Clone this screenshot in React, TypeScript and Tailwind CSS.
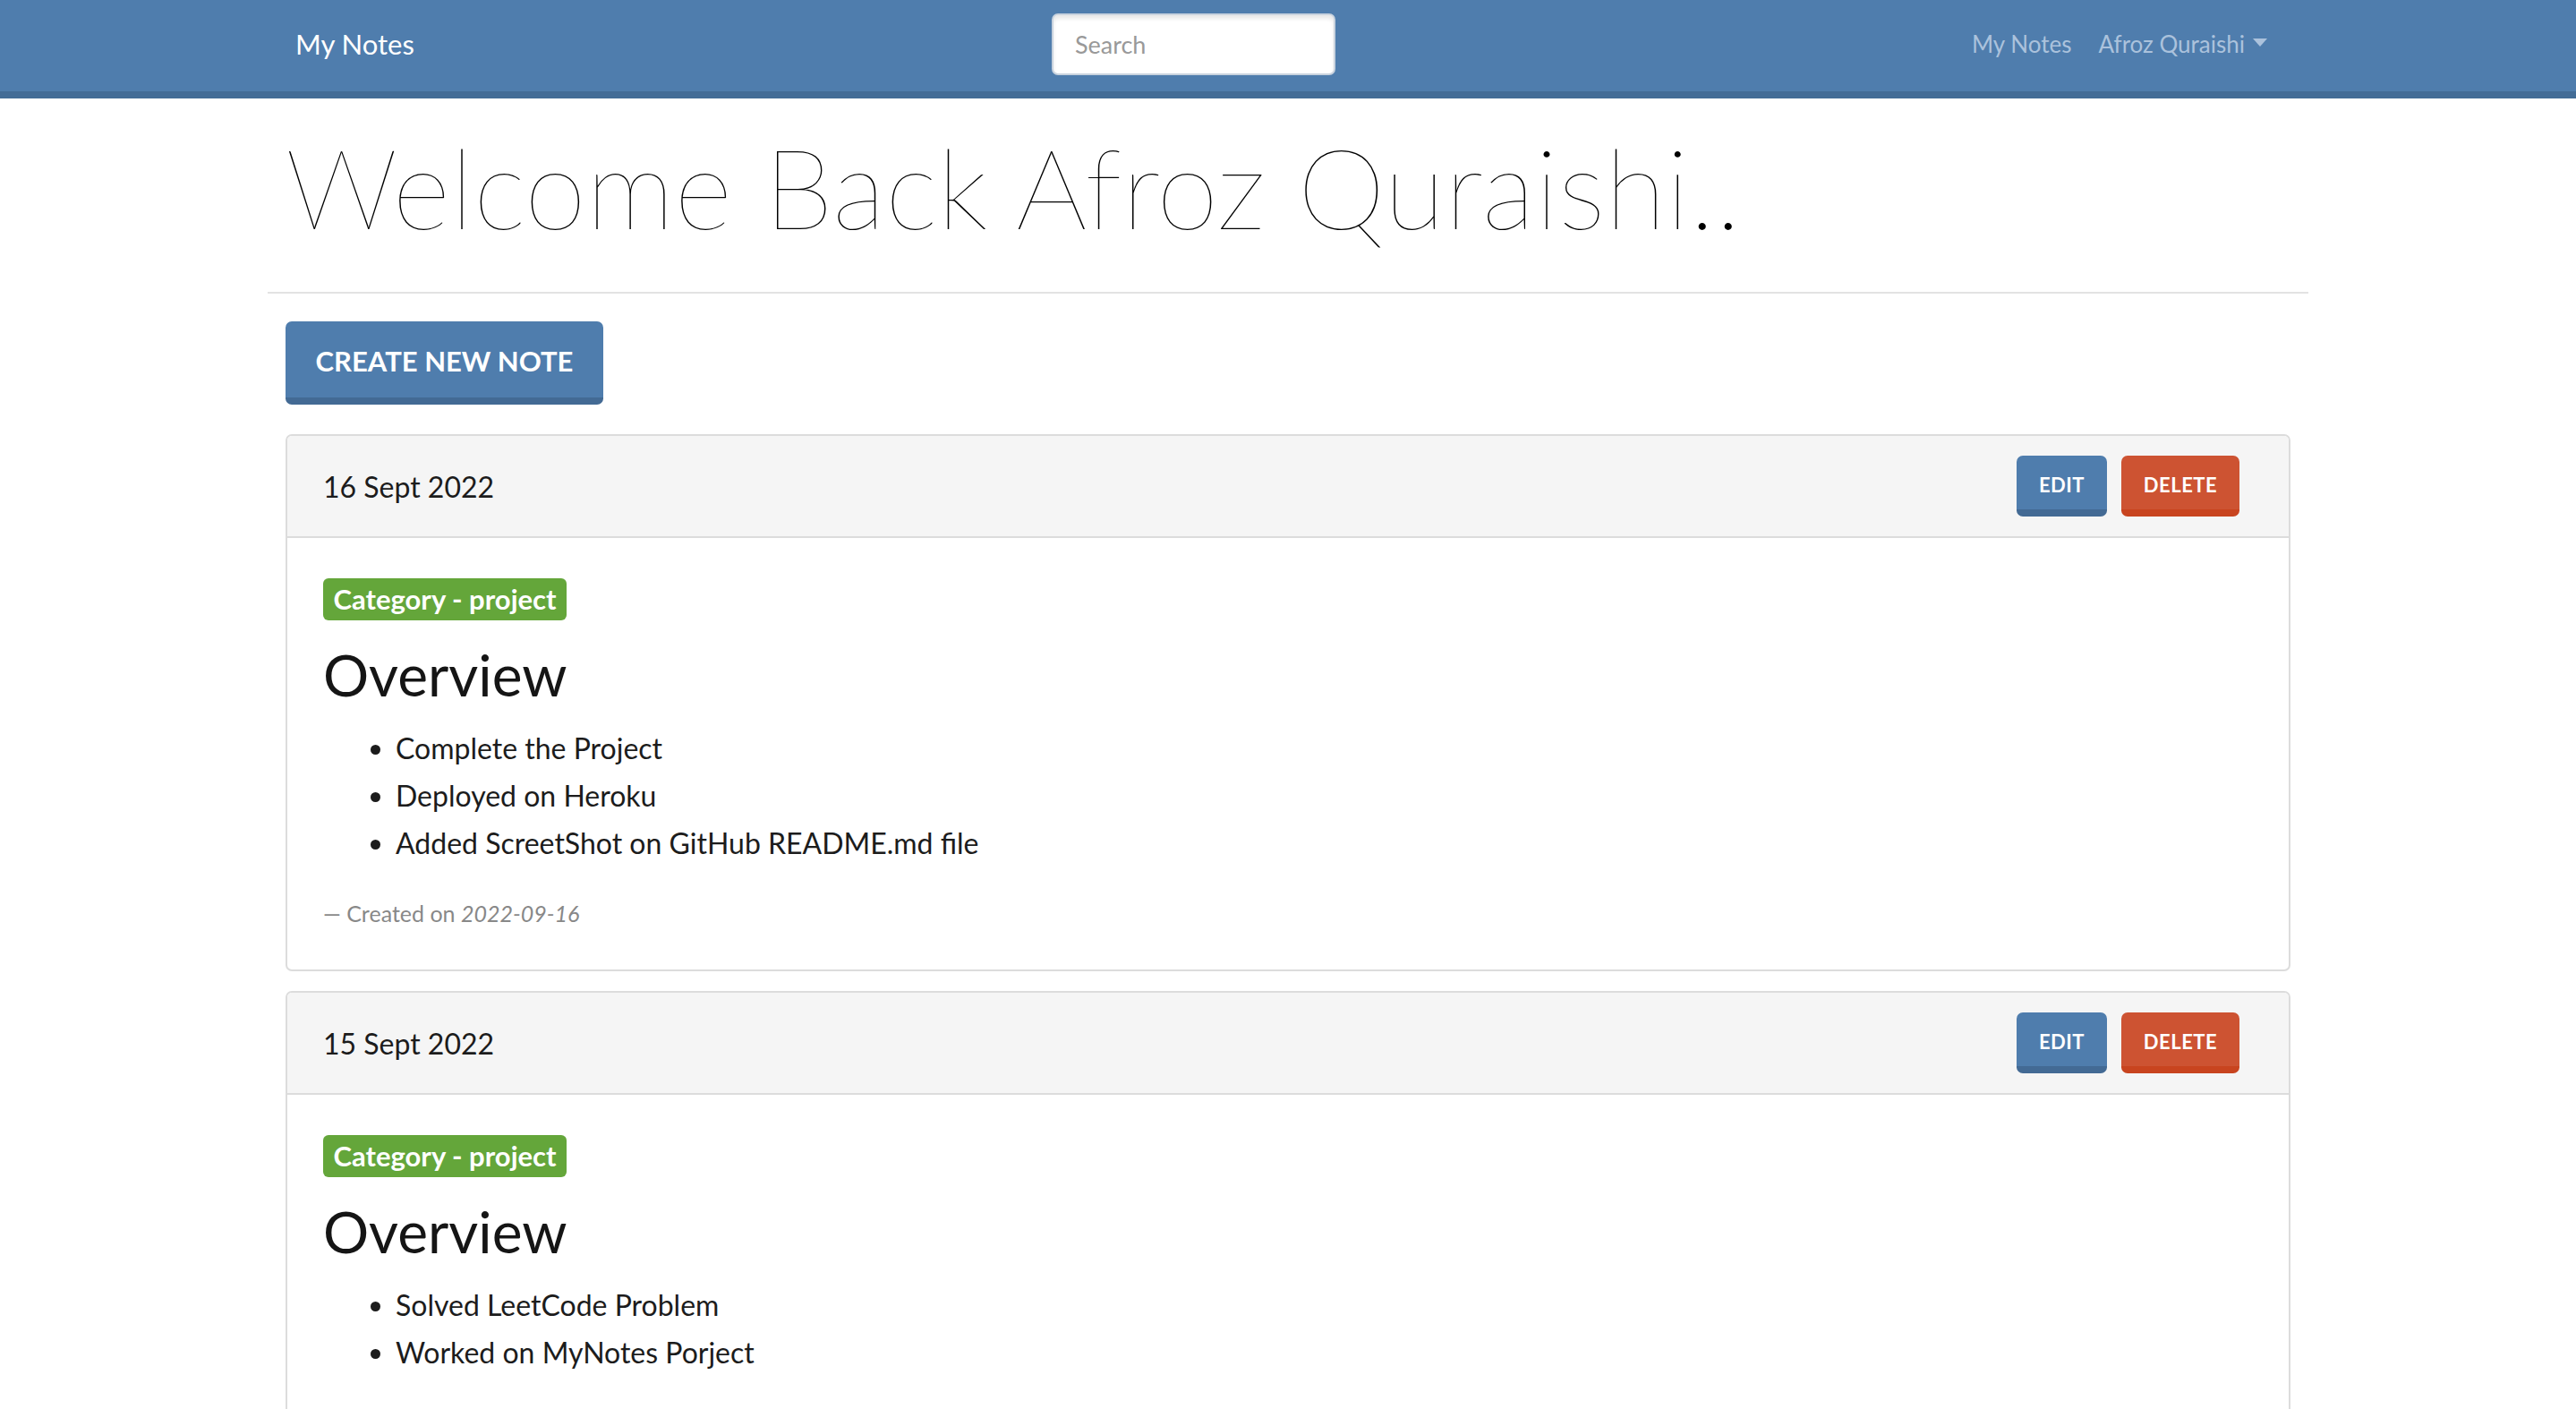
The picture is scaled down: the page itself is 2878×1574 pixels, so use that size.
import React from "react";

type Note = {
  date: string;
  category: string;
  title: string;
  items: string[];
  created: string;
};

const notes: Note[] = [
  {
    date: "16 Sept 2022",
    category: "project",
    title: "Overview",
    items: ["Complete the Project", "Deployed on Heroku", "Added ScreetShot on GitHub README.md file"],
    created: "2022-09-16",
  },
  {
    date: "15 Sept 2022",
    category: "project",
    title: "Overview",
    items: ["Solved LeetCode Problem", "Worked on MyNotes Porject"],
    created: "2022-09-15",
  },
];

const NoteCard = ({ note }: { note: Note }) => (
  <div className="overflow-hidden rounded-[7px] border-2 border-[#dcdcdc] bg-white">
    {/* header */}
    <div className="flex h-[114px] items-center justify-between border-b-2 border-[#dcdcdc] bg-[#f5f5f5] pl-[40px] pr-[55px]">
      <span className="pt-[2px] text-[32px] leading-none text-[#1c1c1c]">{note.date}</span>
      <div className="flex items-center gap-[16px]">
        <button className="flex h-[68px] w-[101px] items-center justify-center rounded-[7px] border-b-[8px] border-[#436a94] bg-[#4f7dad] pt-[6px] text-[22px] font-bold leading-none tracking-[0.5px] text-white">
          EDIT
        </button>
        <button className="flex h-[68px] w-[132px] items-center justify-center rounded-[7px] border-b-[8px] border-[#c8441f] bg-[#cd5332] pt-[6px] text-[22px] font-bold leading-none tracking-[0.5px] text-white">
          DELETE
        </button>
      </div>
    </div>

    {/* body */}
    <div className="px-[40px] pt-[45px] pb-[50px]">
      <span className="flex h-[47px] w-[272px] items-center justify-center rounded-[6px] bg-[#64a63a] text-[31px] font-bold leading-none text-white">
        Category - {note.category}
      </span>
      <h2 className="mt-[29px] text-[64px] font-normal leading-none text-[#151515]">{note.title}</h2>
      <ul className="mt-[23px] list-disc pl-[81px] text-[32px] leading-[53px] text-[#1c1c1c]">
        {note.items.map((it) => (
          <li key={it}>{it}</li>
        ))}
      </ul>
      <p className="mt-[40px] text-[25px] leading-none text-[#888888]">
        — Created on <span className="italic">{note.created}</span>
      </p>
    </div>
  </div>
);

export default function App() {
  return (
    <div className="min-h-screen bg-white font-['Lato',sans-serif] text-[#222]">
      {/* navbar */}
      <nav className="border-b-[8px] border-[#436c96] bg-[#4f7dad]">
        <div className="mx-auto flex h-[102px] w-[2280px] items-center px-[31px] pb-[4px]">
          <span className="mr-[16px] text-[31px] leading-none text-white">My Notes</span>
          <div className="flex flex-1 justify-center">
            <input
              placeholder="Search"
              className="h-[69px] w-[317px] rounded-[7px] border-2 border-[#c9d3de] bg-white px-[24px] text-[27px] text-[#333] shadow-[inset_0_4px_4px_rgba(0,0,0,0.09)] outline-none placeholder:text-[#999]"
            />
          </div>
          <div className="flex items-center text-[26px] leading-none text-[#abc2dc]">
            <span className="px-[15px]">My Notes</span>
            <span className="flex items-center px-[15px]">
              Afroz Quraishi
              <span className="ml-[9px] mb-[4px] h-0 w-0 border-x-[8px] border-t-[9px] border-x-transparent border-t-[#abc2dc]" />
            </span>
          </div>
        </div>
      </nav>

      <main className="mx-auto w-[2280px]">
        <h1 className="mt-[36px] px-[20px] text-[125px] font-extralight leading-none text-black">
          Welcome Back Afroz Quraishi..
        </h1>
        <hr className="mt-[55px] border-t-2 border-[#e3e3e3]" />

        <div className="px-[20px]">
          <button className="mt-[31px] flex h-[93px] w-[355px] items-center justify-center rounded-[7px] border-b-[8px] border-[#436a94] bg-[#4f7dad] pt-[4px] text-[31px] font-bold leading-none text-white">
            CREATE NEW NOTE
          </button>

          <div className="mt-[33px] flex flex-col gap-[22px]">
            {notes.map((n) => (
              <NoteCard key={n.date} note={n} />
            ))}
          </div>
        </div>
      </main>
    </div>
  );
}
